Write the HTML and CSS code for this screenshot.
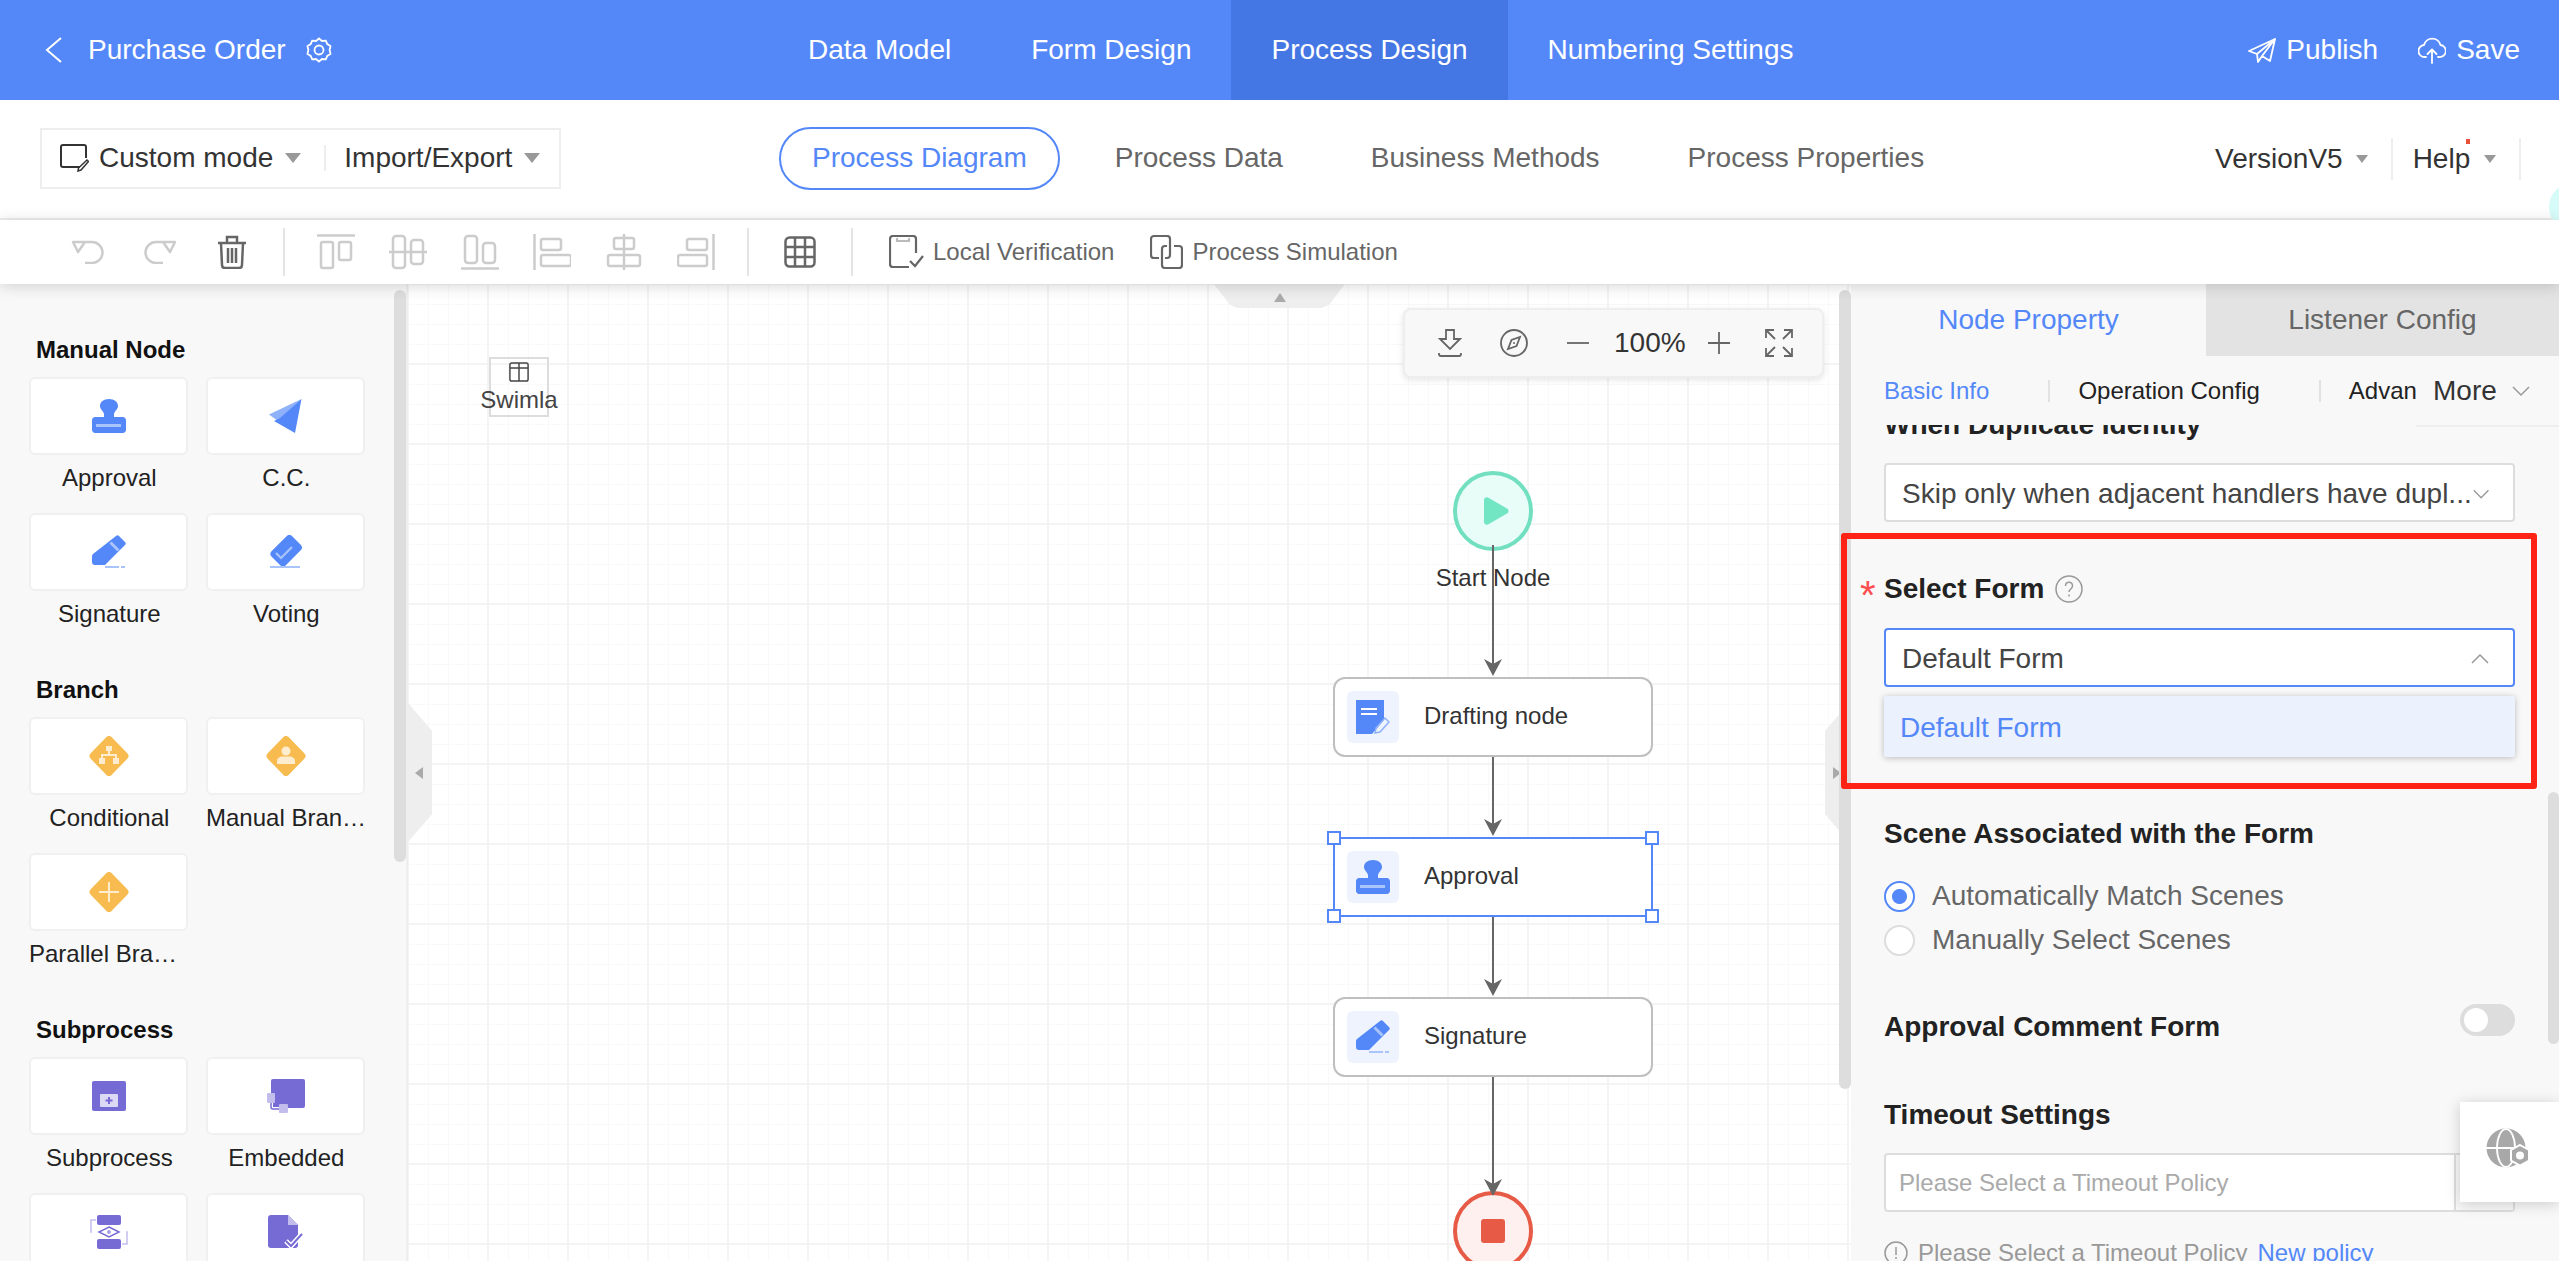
FILE: index.html
```html
<!DOCTYPE html>
<html>
  <head>
    <title>Purchase Order - Process Design</title>
    <link rel="stylesheet" href="styles.css">
  </head>
  <body>
    <svg class="defs" width="0" height="0">
      <defs>
        <symbol id="ico-stamp" viewBox="0 0 34 34">
          <path fill="#5488f8" d="M17 0c5.500 0 9 3 9 7 0 3.500-3.500 5-4 8v3h9c1.500 0 3 1.500 3 3v10c0 1.500-1.500 3-3 3H3c-1.500 0-3-1.500-3-3V21c0-1.500 1.500-3 3-3h9v-3c-.5-3-4-4.500-4-8 0-4 3.500-7 9-7z"/>
          <rect x="4" y="25" width="25" height="3" fill="#a9c4fb"/>
        </symbol>
        <symbol id="ico-pen" viewBox="0 0 34 34">
          <path fill="#5488f8" d="M24 1c1-1 2-1 3 0l6 6c1 1 1 2 0 3L13 30H3c-2 0-3-1-3-3v-5c0-1 0-2 1-3z"/>
          <path stroke="#a9c4fb" stroke-width="3" d="M18.500 7.500l8 8"/>
          <path stroke="#a9c4fb" stroke-width="2" d="M13 32h14M29 32h4"/>
        </symbol>
      </defs>
    </svg>

    <div class="app">
      <header class="topbar">
        <div class="topbar-left">
          <svg class="back" width="18" height="26" viewBox="0 0 18 26"><path d="M16 1L2 13l14 12" fill="none" stroke="#fff" stroke-width="2"/></svg>
          <span class="doc-title">Purchase Order</span>
          <svg class="gear" width="26" height="26" viewBox="0 0 26 26" fill="none" stroke="#fff" stroke-width="1.800"><path d="M13 1.500l3 2.500 3.800-.4 1.500 3.500 3.200 2-.9 3.900.9 3.900-3.200 2-1.500 3.500-3.800-.4-3 2.500-3-2.500-3.800.4-1.500-3.500-3.200-2 .9-3.900-.9-3.900 3.200-2 1.500-3.500 3.800.4z"/><circle cx="13" cy="13" r="4.500"/></svg>
        </div>
        <nav class="topnav">
          <a class="topnav-item">Data Model</a>
          <a class="topnav-item">Form Design</a>
          <a class="topnav-item active">Process Design</a>
          <a class="topnav-item">Numbering Settings</a>
        </nav>
        <div class="topbar-right">
          <span class="top-action">
            <svg width="28" height="26" viewBox="0 0 28 26" fill="none" stroke="#fff" stroke-width="1.800" stroke-linejoin="round"><path d="M27 2L1 14l8 3zM27 2L9 17l1 8 4-6zM27 2l-5 22-8-5"/></svg>
            Publish
          </span>
          <span class="top-action">
            <svg width="28" height="28" viewBox="0 0 28 28" fill="none" stroke="#fff" stroke-width="1.800" stroke-linecap="round" stroke-linejoin="round"><path d="M8 21H7a6 6 0 0 1-1-12 8.500 8.500 0 0 1 16.500 0A6 6 0 0 1 21 21h-1M14 27V14M9.500 18l4.500-4.500 4.500 4.500"/></svg>
            Save
          </span>
        </div>
      </header>

      <div class="modebar">
        <div class="modebox">
          <svg width="29" height="28" viewBox="0 0 29 28" fill="none" stroke="#333" stroke-width="2"><path d="M20 23H3c-1 0-2-1-2-2V3c0-1 1-2 2-2h21c1 0 2 1 2 2v11"/><path d="M27 16l1.500 1.500L21 26l-3 1 .5-3z" stroke-width="1.500"/></svg>
          <span class="modebox-text">Custom mode</span>
          <i class="caret"></i>
          <i class="modebox-sep"></i>
          <span class="modebox-text">Import/Export</span>
          <i class="caret"></i>
        </div>
        <div class="viewtabs">
          <a class="viewtab active">Process Diagram</a>
          <a class="viewtab">Process Data</a>
          <a class="viewtab">Business Methods</a>
          <a class="viewtab">Process Properties</a>
        </div>
        <div class="modebar-right">
          <span class="meta-item version">VersionV5<i class="caret small"></i></span>
          <span class="meta-item help"><span class="help-text">Help<i class="dot"></i></span><i class="caret small"></i></span>
        </div>
        <i class="bubble"></i>
      </div>

      <div class="toolbar">
        <span class="tool"><svg width="34" height="24" viewBox="0 0 34 24" fill="none" stroke="#ccc" stroke-width="2.500" stroke-linejoin="round"><path d="M2 2h12L7 12zM13 2h8a10.500 10.500 0 0 1 0 21h-7"/></svg></span>
        <span class="tool"><svg width="34" height="24" viewBox="0 0 34 24" fill="none" stroke="#ccc" stroke-width="2.500" stroke-linejoin="round"><path d="M32 2H20l7 10zM21 2h-8a10.500 10.500 0 0 0 0 21h7"/></svg></span>
        <span class="tool"><svg width="30" height="34" viewBox="0 0 30 34" fill="none" stroke="#666" stroke-width="2.500"><path d="M1 8h28M10 7V2h10v5M4 8l1 22c0 1.500 1 3 3 3h14c2 0 3-1.500 3-3l1-22M11 13v15M19 13v15M15 13v15"/></svg></span>
        <i class="tool-sep"></i>
        <span class="tool"><svg class="align" width="38" height="36" viewBox="0 0 38 36"><path d="M0 1.500h38"/><rect x="4" y="8" width="12" height="26" rx="2"/><rect x="22" y="8" width="12" height="18" rx="2"/></svg></span>
        <span class="tool"><svg class="align" width="38" height="36" viewBox="0 0 38 36"><path d="M0 18h38"/><rect x="4" y="2" width="12" height="32" rx="3"/><rect x="22" y="6" width="12" height="24" rx="3"/></svg></span>
        <span class="tool"><svg class="align" width="38" height="36" viewBox="0 0 38 36"><path d="M0 34.500h38"/><rect x="4" y="2" width="12" height="27" rx="3"/><rect x="22" y="9" width="12" height="20" rx="3"/></svg></span>
        <span class="tool"><svg class="align" width="38" height="36" viewBox="0 0 38 36"><path d="M1.500 0v36"/><rect x="8" y="5" width="20" height="11" rx="2"/><rect x="8" y="21" width="30" height="11" rx="2"/></svg></span>
        <span class="tool"><svg class="align" width="38" height="36" viewBox="0 0 38 36"><path d="M19 0v36"/><rect x="9" y="4" width="20" height="11" rx="2"/><rect x="3" y="21" width="32" height="11" rx="2"/></svg></span>
        <span class="tool"><svg class="align" width="38" height="36" viewBox="0 0 38 36"><path d="M36.500 0v36"/><rect x="10" y="5" width="20" height="11" rx="2"/><rect x="1" y="21" width="29" height="11" rx="2"/></svg></span>
        <i class="tool-sep"></i>
        <span class="tool"><svg width="32" height="32" viewBox="0 0 32 32" fill="none" stroke="#666" stroke-width="2.500"><rect x="1.500" y="1.500" width="29" height="29" rx="4"/><path d="M1 11h30M1 21h30M11 1v30M21 1v30"/></svg></span>
        <i class="tool-sep"></i>
        <span class="tool-text first">
          <svg width="35" height="34" viewBox="0 0 35 34" fill="none" stroke="#666" stroke-width="2.200"><path d="M20 32H4c-2 0-3-1-3-3V4c0-2 1-3 3-3h20c2 0 3 1 3 3v14"/><path d="M8 3v3h12V3" stroke="#bbb"/><path d="M21 26l5 5 8-10"/></svg>
          Local Verification
        </span>
        <span class="tool-text">
          <svg width="33" height="34" viewBox="0 0 33 34" fill="none" stroke="#666" stroke-width="2.200"><path d="M9 23H4a3 3 0 0 1-3-3V4a3 3 0 0 1 3-3h13a3 3 0 0 1 3 3v16a3 3 0 0 1-3 3h-2"/><path d="M24 11h5a3 3 0 0 1 3 3v16a3 3 0 0 1-3 3H15a3 3 0 0 1-3-3V14a3 3 0 0 1 3-3h2"/></svg>
          Process Simulation
        </span>
      </div>

      <main class="workspace">
        <aside class="palette">
          <i class="scroll-thumb palette-thumb"></i>

          <section class="palette-group">
            <h3 class="palette-title">Manual Node</h3>
            <div class="palette-grid">
              <div class="palette-item">
                <div class="palette-card"><svg width="34" height="34"><use href="#ico-stamp"/></svg></div>
                <div class="palette-label">Approval</div>
              </div>
              <div class="palette-item">
                <div class="palette-card">
                  <svg width="33" height="34" viewBox="0 0 33 34"><path fill="#8fb1fa" d="M32.500 0L0 15.500 9 22z"/><path fill="#5488f8" d="M32.500 0L26 34 5 22l6-3z"/></svg>
                </div>
                <div class="palette-label">C.C.</div>
              </div>
              <div class="palette-item">
                <div class="palette-card"><svg width="34" height="34"><use href="#ico-pen"/></svg></div>
                <div class="palette-label">Signature</div>
              </div>
              <div class="palette-item">
                <div class="palette-card">
                  <svg width="35" height="34" viewBox="0 0 35 34"><rect x="3" y="6" width="29" height="20" rx="4" fill="#5488f8" transform="rotate(-45 17.500 15)"/><path d="M8 18l5 5 11-11" fill="none" stroke="#a9c4fb" stroke-width="2.200"/><path d="M2 32h30" stroke="#a9c4fb" stroke-width="2"/></svg>
                </div>
                <div class="palette-label">Voting</div>
              </div>
            </div>
          </section>

          <section class="palette-group">
            <h3 class="palette-title">Branch</h3>
            <div class="palette-grid">
              <div class="palette-item">
                <div class="palette-card">
                  <svg width="40" height="40" viewBox="0 0 40 40"><path fill="#f7bb4f" d="M17 1.500c1.500-2 4.500-2 6 0l15.500 16c1.500 1.500 1.500 3.500 0 5L23 38.500c-1.500 2-4.500 2-6 0L1.500 22.500c-1.500-1.500-1.500-3.500 0-5z"/><path fill="#fdeccd" d="M17 10h6v5h-2v3h7v4h2v6h-6v-6h2v-2H14v2h2v6h-6v-6h2v-4h7v-3h-2z"/></svg>
                </div>
                <div class="palette-label">Conditional</div>
              </div>
              <div class="palette-item">
                <div class="palette-card">
                  <svg width="40" height="40" viewBox="0 0 40 40"><path fill="#f7bb4f" d="M17 1.500c1.500-2 4.500-2 6 0l15.500 16c1.500 1.500 1.500 3.500 0 5L23 38.500c-1.500 2-4.500 2-6 0L1.500 22.500c-1.500-1.500-1.500-3.500 0-5z"/><circle cx="20" cy="15" r="4.500" fill="#fdeccd"/><path fill="#fdeccd" d="M11 28v-3c0-3 3-4.500 5-4.500h8c2 0 5 1.500 5 4.500v3z"/></svg>
                </div>
                <div class="palette-label">Manual Branch</div>
              </div>
              <div class="palette-item">
                <div class="palette-card">
                  <svg width="40" height="40" viewBox="0 0 40 40"><path fill="#f7bb4f" d="M17 1.500c1.500-2 4.500-2 6 0l15.500 16c1.500 1.500 1.500 3.500 0 5L23 38.500c-1.500 2-4.500 2-6 0L1.500 22.500c-1.500-1.500-1.500-3.500 0-5z"/><path stroke="#fdeccd" stroke-width="2" d="M20 10v20M10 20h20"/></svg>
                </div>
                <div class="palette-label">Parallel Branch</div>
              </div>
            </div>
          </section>

          <section class="palette-group">
            <h3 class="palette-title">Subprocess</h3>
            <div class="palette-grid">
              <div class="palette-item">
                <div class="palette-card">
                  <svg width="34" height="30" viewBox="0 0 34 30"><rect width="34" height="30" rx="2" fill="#766bd5"/><rect x="8" y="13" width="18" height="13" rx="1" fill="#dcd9f5"/><path d="M17 16v7M13.500 19.500h7" stroke="#766bd5" stroke-width="2"/></svg>
                </div>
                <div class="palette-label">Subprocess</div>
              </div>
              <div class="palette-item">
                <div class="palette-card">
                  <svg width="38" height="34" viewBox="0 0 38 34"><rect x="4" y="0" width="34" height="29" rx="2" fill="#766bd5"/><path d="M4 18v10c0 1 1 2 2 2h6" fill="none" stroke="#fff" stroke-width="4"/><path d="M4 18v10c0 1 1 2 2 2h6" fill="none" stroke="#766bd5" stroke-width="1.500"/><rect y="14" width="8" height="10" rx="1" fill="#c3bdee"/><rect x="12" y="25" width="9" height="9" rx="1" fill="#c3bdee"/></svg>
                </div>
                <div class="palette-label">Embedded</div>
              </div>
              <div class="palette-item">
                <div class="palette-card">
                  <svg width="38" height="34" viewBox="0 0 38 34"><rect x="7" width="24" height="10" rx="2" fill="#766bd5"/><rect x="7" y="24" width="24" height="10" rx="2" fill="#766bd5"/><path d="M19 12l10 5-10 5-10-5z" fill="none" stroke="#766bd5" stroke-width="1.500"/><circle cx="19" cy="17" r="2" fill="#a79fe4"/><path d="M6 5H1v12h1M32 29h5V17h-1" fill="none" stroke="#c3bdee" stroke-width="1.500"/></svg>
                </div>
              </div>
              <div class="palette-item">
                <div class="palette-card">
                  <svg width="36" height="34" viewBox="0 0 36 34"><path d="M3 0h17l10 10v20c0 2-1 3-3 3H3c-2 0-3-1-3-3V3c0-2 1-3 3-3z" fill="#766bd5"/><path d="M20 0l10 10H20z" fill="#c3bdee"/><path d="M18 26l5 5 11-12" fill="none" stroke="#fff" stroke-width="5"/><path d="M18 26l5 5 11-12" fill="none" stroke="#766bd5" stroke-width="2"/></svg>
                </div>
              </div>
            </div>
          </section>
        </aside>

        <div class="canvas">
          <div class="swimlane">
            <svg width="22" height="22" viewBox="0 0 22 22" fill="none" stroke="#444" stroke-width="1.600"><rect x="1" y="1" width="20" height="20" rx="2"/><path d="M1 6.500h20M11 1v20"/></svg>
            <span class="swimlane-text">Swimla</span>
          </div>

          <div class="collapse-top"><i class="tri-up"></i></div>
          <div class="collapse-side left"><i class="tri-left"></i></div>
          <div class="collapse-side right"><i class="tri-right"></i></div>

          <div class="zoombar">
            <svg width="24" height="28" viewBox="0 0 24 28" fill="none" stroke="#666" stroke-width="1.800"><path d="M8 1h8v9h6L12 20 2 10h6zM1 24v1c0 1 1 2 2 2h18c1 0 2-1 2-2v-1"/></svg>
            <svg width="28" height="28" viewBox="0 0 28 28" fill="none" stroke="#666" stroke-width="1.800"><circle cx="14" cy="14" r="13"/><path d="M20 8l-3.500 9L8 20l3.500-9z"/><circle cx="14" cy="14" r="1" fill="#666" stroke="none"/></svg>
            <svg width="24" height="24" viewBox="0 0 24 24" stroke="#666" stroke-width="1.800"><path d="M1 12h22"/></svg>
            <span class="zoom-value">100%</span>
            <svg width="24" height="24" viewBox="0 0 24 24" stroke="#666" stroke-width="1.800"><path d="M1 12h22M12 1v22"/></svg>
            <svg width="28" height="28" viewBox="0 0 28 28" fill="none" stroke="#666" stroke-width="1.800"><path d="M9 1H1v8M1 1l9 9M19 1h8v8M27 1l-9 9M9 27H1v-8M1 27l9-9M19 27h8v-8M27 27l-9-9"/></svg>
          </div>

          <div class="event start">
            <svg width="28" height="28" viewBox="0 0 28 28"><path fill="#72e6c2" d="M2 3c0-2 2-3.500 4-2.500l19 11c2 1 2 4 0 5L6 27.500c-2 1-4-.5-4-2.500z"/></svg>
          </div>
          <div class="event-label">Start Node</div>

          <div class="event end"><i class="stop"></i></div>

          <div class="node drafting">
            <span class="node-icon">
              <svg width="34" height="34" viewBox="0 0 34 34"><path fill="#5488f8" d="M0 0h28v20L18 34H0z"/><path stroke="#fff" stroke-width="2" d="M5 9h16M5 14h16"/><path fill="#eef3fe" stroke="#eef3fe" stroke-width="3" d="M18 34l12-14 4 4-12 10z"/><path fill="none" stroke="#8fb1fa" stroke-width="1.500" d="M20 28l9-10 4 4-9 10-5 1z"/></svg>
            </span>
            <span class="node-label">Drafting node</span>
          </div>

          <div class="node selected approval">
            <span class="node-icon"><svg width="34" height="34"><use href="#ico-stamp"/></svg></span>
            <span class="node-label">Approval</span>
            <i class="handle tl"></i><i class="handle tr"></i><i class="handle bl"></i><i class="handle br"></i>
          </div>

          <div class="node signature">
            <span class="node-icon"><svg width="34" height="34"><use href="#ico-pen"/></svg></span>
            <span class="node-label">Signature</span>
          </div>

          <svg class="edges" width="1443" height="977">
            <g stroke="#666" stroke-width="2">
              <path d="M1085 261V380"/>
              <path d="M1085 473V541"/>
              <path d="M1085 633V701"/>
              <path d="M1085 793V900"/>
            </g>
            <g fill="#666">
              <path d="M1085 392l-9-17 9 5 9-5z"/>
              <path d="M1085 552l-9-17 9 5 9-5z"/>
              <path d="M1085 712l-9-17 9 5 9-5z"/>
              <path d="M1085 912l-9-17 9 5 9-5z"/>
            </g>
          </svg>

          <i class="scroll-thumb canvas-thumb"></i>
        </div>

        <aside class="props">
          <div class="props-tabs">
            <a class="props-tab active">Node Property</a>
            <a class="props-tab">Listener Config</a>
          </div>
          <div class="subtabs">
            <div class="subtabs-list">
              <a class="subtab active">Basic Info</a>
              <i class="subtab-sep"></i>
              <a class="subtab">Operation Config</a>
              <i class="subtab-sep"></i>
              <a class="subtab">Advanced</a>
            </div>
            <div class="subtabs-more">
              More
              <svg width="20" height="12" viewBox="0 0 20 12" fill="none" stroke="#999" stroke-width="1.500"><path d="M2 2l8 8 8-8"/></svg>
            </div>
          </div>

          <div class="form">
            <div class="form-inner">
              <div class="field-label cut">When Duplicate Identity</div>
              <div class="select">
                <span class="select-text">Skip only when adjacent handlers have dupl...</span>
                <svg class="chevron" width="20" height="12" viewBox="0 0 20 12" fill="none" stroke="#999" stroke-width="1.500"><path d="M2 2l8 8 8-8"/></svg>
              </div>

              <div class="field-label select-form">
                <i class="required">*</i>
                Select Form
                <svg class="help-icon" width="28" height="28" viewBox="0 0 28 28" fill="none" stroke="#999" stroke-width="1.500"><circle cx="14" cy="14" r="13"/><path d="M10.500 11c0-5 7-5 7 0 0 3-3.500 3-3.500 6M14 19.500v2"/></svg>
              </div>
              <div class="select-wrap">
                <div class="select open">
                  <span class="select-text">Default Form</span>
                  <svg class="chevron" width="20" height="12" viewBox="0 0 20 12" fill="none" stroke="#999" stroke-width="1.500"><path d="M2 10l8-8 8 8"/></svg>
                </div>
                <div class="select-menu">Default Form</div>
              </div>

              <div class="field-label scene">Scene Associated with the Form</div>
              <label class="radio checked"><i class="radio-dot"></i>Automatically Match Scenes</label>
              <label class="radio"><i class="radio-dot"></i>Manually Select Scenes</label>

              <div class="field-label comment">
                Approval Comment Form
                <i class="switch"></i>
              </div>

              <div class="field-label timeout">Timeout Settings</div>
              <div class="input-group">
                <span class="input-placeholder">Please Select a Timeout Policy</span>
                <i class="input-addon"></i>
              </div>
              <div class="hint">
                <svg width="24" height="24" viewBox="0 0 24 24" fill="none" stroke="#999" stroke-width="1.500"><circle cx="12" cy="12" r="11"/><path d="M12 6v8M12 16v2"/></svg>
                <span>Please Select a Timeout Policy</span>
                <a class="hint-link">New policy</a>
              </div>
            </div>
          </div>

          <i class="scroll-thumb props-thumb"></i>

          <div class="float-globe">
            <svg width="44" height="40" viewBox="0 0 44 40"><circle cx="20" cy="20" r="19.500" fill="#a8a8a8"/><ellipse cx="20" cy="20" rx="9" ry="19" fill="none" stroke="#fff" stroke-width="1.800"/><path d="M0 20h40" stroke="#fff" stroke-width="1.800"/><path fill="#a8a8a8" stroke="#fff" stroke-width="2" d="M34 17l9 5v10.500l-9 5-9-5V22z"/><circle cx="34" cy="27.500" r="4" fill="#fff"/></svg>
          </div>
        </aside>

        <div class="highlight"></div>
      </main>
    </div>
  </body>
</html>
```

FILE: styles.css
```css
* {
  box-sizing: border-box;
}
html,
body {
  margin: 0;
  height: 100%;
  overflow: hidden;
}
body {
  font-family: "Liberation Sans", Arial, sans-serif;
  font-size: 24px;
  color: #333;
}
i {
  font-style: normal;
}
.defs {
  position: absolute;
}
.app {
  display: flex;
  flex-direction: column;
  height: 1261px;
  overflow: hidden;
}

/* top blue bar */
.topbar {
  display: flex;
  align-items: stretch;
  flex: none;
  height: 100px;
  background: #5488f8;
  color: #fff;
  font-size: 28px;
}
.topbar-left {
  display: flex;
  align-items: center;
  width: 768px;
  padding-left: 45px;
}
.doc-title {
  margin-left: 25px;
}
.gear {
  margin-left: 20px;
}
.topnav {
  display: flex;
}
.topnav-item {
  display: flex;
  align-items: center;
  padding: 0 40px;
}
.topnav-item.active {
  background: #4476e4;
}
.topbar-right {
  display: flex;
  align-items: center;
  gap: 40px;
  margin-left: auto;
  padding-right: 39px;
}
.top-action {
  display: flex;
  align-items: center;
  gap: 10px;
}

/* second row */
.modebar {
  position: relative;
  display: flex;
  align-items: center;
  flex: none;
  height: 120px;
  padding: 0 40px 2px;
  background: #fff;
  border-bottom: 2px solid #eee;
  font-size: 28px;
}
.modebox {
  display: flex;
  align-items: center;
  width: 521px;
  height: 61px;
  padding-left: 18px;
  border: 2px solid #eee;
}
.modebox-text {
  color: #333;
}
.modebox svg {
  margin-right: 10px;
}
.caret {
  display: inline-block;
  margin-left: 12px;
  border-top: 10px solid #999;
  border-left: 8px solid transparent;
  border-right: 8px solid transparent;
}
.caret.small {
  margin-left: 13px;
  border-top-width: 8px;
  border-left-width: 6px;
  border-right-width: 6px;
}
.modebox-sep {
  width: 2px;
  height: 26px;
  margin: 0 18px 0 23px;
  background: #eee;
}
.viewtabs {
  display: flex;
  gap: 22px;
  margin-left: 218px;
  color: #666;
}
.viewtab {
  display: flex;
  align-items: center;
  height: 63px;
  padding: 0 31px;
  border: 2px solid transparent;
  border-radius: 32px;
}
.viewtab.active {
  border-color: #5488f8;
  color: #5488f8;
}
.modebar-right {
  position: absolute;
  left: 2215px;
  top: 38px;
  display: flex;
  align-items: center;
  height: 42px;
}
.meta-item {
  display: flex;
  align-items: center;
  height: 42px;
}
.version {
  padding-right: 23px;
  border-right: 2px solid #eee;
}
.help {
  padding: 0 23px 0 20px;
  border-right: 2px solid #eee;
}
.help .caret.small {
  margin-left: 14px;
}
.help-text {
  position: relative;
}
.dot {
  position: absolute;
  right: 0;
  top: -4px;
  width: 4px;
  height: 5px;
  background: #e8503a;
}
.bubble {
  position: absolute;
  right: -38px;
  top: 83px;
  width: 48px;
  height: 48px;
  border-radius: 50%;
  background: #d6fbf8;
}

/* tools row */
.toolbar {
  position: relative;
  z-index: 3;
  display: flex;
  align-items: center;
  flex: none;
  height: 64px;
  padding-left: 52px;
  background: #fff;
  box-shadow: 0 2px 14px rgba(0, 0, 0, 0.16);
}
.tool {
  display: flex;
  align-items: center;
  justify-content: center;
  width: 72px;
}
.tool-sep {
  width: 2px;
  height: 48px;
  margin: 0 15px;
  background: #e4e4e4;
}
.align {
  fill: none;
  stroke: #ccc;
  stroke-width: 2.500;
}
.tool-text {
  display: flex;
  align-items: center;
  gap: 9px;
  margin-left: 36px;
  color: #666;
}
.tool-text.first {
  margin-left: 21px;
}

/* main area */
.workspace {
  position: relative;
  display: flex;
  flex: 1;
  min-height: 0;
}
.scroll-thumb {
  position: absolute;
  width: 12px;
  border-radius: 6px;
  background: #ddd;
}

/* left palette */
.palette {
  position: relative;
  flex: none;
  width: 408px;
  padding: 51px 0 0 29px;
  overflow: hidden;
  background: #f8f8f8;
  border-right: 2px solid #eee;
}
.palette-thumb {
  left: 394px;
  top: 6px;
  height: 572px;
}
.palette-group {
  margin-bottom: 26px;
}
.palette-title {
  height: 30px;
  margin: 0 0 12px 7px;
  font-size: 24px;
  line-height: 30px;
  color: #111;
}
.palette-grid {
  display: grid;
  grid-template-columns: 159px 159px;
  column-gap: 18px;
}
.palette-item {
  height: 136px;
}
.palette-card {
  display: flex;
  align-items: center;
  justify-content: center;
  height: 78px;
  background: #fff;
  border: 2px solid #f0f0f0;
  border-radius: 6px;
}
.palette-label {
  height: 46px;
  margin-right: -1.700px;
  overflow: hidden;
  text-align: center;
  text-overflow: ellipsis;
  white-space: nowrap;
  line-height: 46px;
  color: #222;
}

/* canvas */
.canvas {
  position: relative;
  flex: 1;
  overflow: hidden;
  background-color: #fff;
  background-image:
    linear-gradient(to right, #f4f4f4 2px, transparent 2px),
    linear-gradient(to bottom, #f4f4f4 2px, transparent 2px),
    linear-gradient(to right, #f9f9f9 1px, transparent 1px),
    linear-gradient(to bottom, #f9f9f9 1px, transparent 1px);
  background-size: 80px 80px, 80px 80px, 20px 20px, 20px 20px;
  background-position: -1px -1px, -1px -1px, 0 0, 0 0;
}
.swimlane {
  position: absolute;
  left: 81px;
  top: 73px;
  width: 60px;
  height: 60px;
  border: 2px solid #ddd;
  display: flex;
  flex-direction: column;
  align-items: center;
  padding-top: 3px;
}
.swimlane-text {
  margin-top: 3px;
  line-height: 30px;
  color: #444;
  white-space: nowrap;
}
.collapse-top {
  position: absolute;
  left: 806px;
  top: 0;
  width: 131px;
  height: 24px;
  display: flex;
  justify-content: center;
  padding-top: 9px;
  background: #eee;
  clip-path: polygon(0 0, 100% 0, 88% 86%, 82% 100%, 18% 100%, 12% 86%);
}
.tri-up {
  border-bottom: 9px solid #aaa;
  border-left: 6px solid transparent;
  border-right: 6px solid transparent;
  height: 0;
}
.collapse-side {
  position: absolute;
  top: 419px;
  width: 24px;
  height: 139px;
  display: flex;
  align-items: center;
  background: #eee;
}
.collapse-side.left {
  left: 0;
  padding-left: 7px;
  clip-path: polygon(0 0, 100% 20%, 100% 80%, 0 100%);
}
.collapse-side.right {
  left: 1417px;
  padding-left: 8px;
  clip-path: polygon(100% 0, 0 20%, 0 80%, 100% 100%);
}
.tri-left {
  border-right: 8px solid #aaa;
  border-top: 6px solid transparent;
  border-bottom: 6px solid transparent;
}
.tri-right {
  border-left: 8px solid #aaa;
  border-top: 6px solid transparent;
  border-bottom: 6px solid transparent;
}
.zoombar {
  position: absolute;
  left: 995px;
  top: 24px;
  width: 421px;
  height: 70px;
  display: flex;
  align-items: center;
  padding-left: 33px;
  background: #f8f8f8;
  border: 2px solid #eee;
  border-radius: 8px;
  box-shadow: 0 2px 6px rgba(0, 0, 0, 0.1);
}
.zoombar svg:nth-child(2) {
  margin-left: 38px;
}
.zoombar svg:nth-child(3) {
  margin-left: 38px;
}
.zoom-value {
  margin-left: 24px;
  font-size: 28px;
}
.zoombar svg:nth-child(5) {
  margin-left: 21px;
}
.zoombar svg:nth-child(6) {
  margin-left: 34px;
}
.event {
  position: absolute;
  left: 1045px;
  width: 80px;
  height: 80px;
  display: flex;
  align-items: center;
  justify-content: center;
  border-radius: 50%;
  border: 4px solid;
}
.event.start {
  top: 187px;
  padding-left: 5px;
  background: #e8fdf8;
  border-color: #72e0c0;
}
.event.end {
  top: 907px;
  background: #fdf0ee;
  border-color: #e65a46;
}
.stop {
  width: 24px;
  height: 24px;
  border-radius: 3px;
  background: #e65a46;
}
.event-label {
  position: absolute;
  left: 985px;
  top: 279px;
  width: 200px;
  text-align: center;
  line-height: 30px;
}
.node {
  position: absolute;
  left: 925px;
  width: 320px;
  height: 80px;
  display: flex;
  align-items: center;
  padding-left: 12px;
  background: #fff;
  border: 2px solid #bfbfbf;
  border-radius: 12px;
}
.drafting {
  top: 393px;
}
.approval {
  top: 553px;
}
.signature {
  top: 713px;
}
.node.selected {
  border-color: #5488f8;
  border-radius: 0;
}
.node-icon {
  display: flex;
  align-items: center;
  justify-content: center;
  width: 52px;
  height: 52px;
  border-radius: 6px;
  background: #eef3fe;
}
.node-label {
  margin-left: 25px;
  margin-top: -2px;
}
.handle {
  position: absolute;
  width: 14px;
  height: 14px;
  background: #fff;
  border: 2px solid #5488f8;
}
.tl {
  left: -8px;
  top: -8px;
}
.tr {
  right: -8px;
  top: -8px;
}
.bl {
  left: -8px;
  bottom: -8px;
}
.br {
  right: -8px;
  bottom: -8px;
}
.edges {
  position: absolute;
  left: 0;
  top: 0;
  pointer-events: none;
}
.canvas-thumb {
  left: 1431px;
  top: 6px;
  height: 799px;
}

/* right panel */
.props {
  position: relative;
  flex: none;
  width: 708px;
  overflow: hidden;
  background: #f8f8f8;
}
.props-tabs {
  display: flex;
  height: 72px;
}
.props-tab {
  display: flex;
  align-items: center;
  justify-content: center;
  flex: none;
  width: 353px;
  background: #e3e3e3;
  font-size: 28px;
  color: #666;
}
.props-tab.active {
  width: 355px;
  background: #f8f8f8;
  color: #5488f8;
}
.subtabs {
  display: flex;
  height: 69px;
}
.subtabs-list {
  display: flex;
  align-items: center;
  width: 565px;
  padding-left: 33px;
  overflow: hidden;
  white-space: nowrap;
  color: #222;
}
.subtab.active {
  color: #5488f8;
}
.subtab-sep {
  flex: none;
  width: 2px;
  height: 22px;
  margin: 0 28px 0 59px;
  background: #e2e2e2;
}
.subtabs-more {
  display: flex;
  align-items: center;
  flex: 1;
  gap: 14px;
  padding-left: 17px;
  font-size: 28px;
  color: #333;
  background: #f8f8f8;
  border-bottom: 2px solid #eee;
  height: 71px;
  position: relative;
}
.form {
  height: 836px;
  overflow: hidden;
}
.form-inner {
  width: 664px;
  padding-left: 33px;
}
.field-label {
  display: flex;
  align-items: center;
  height: 36px;
  font-size: 28px;
  font-weight: bold;
  color: #222;
  position: relative;
}
.cut {
  margin-top: -18px;
  margin-bottom: 20px;
}
.select {
  display: flex;
  align-items: center;
  justify-content: space-between;
  height: 59px;
  padding: 2px 23px 0 16px;
  background: #fff;
  border: 2px solid #ddd;
  border-radius: 4px;
  font-size: 28px;
  color: #444;
}
.select-text {
  white-space: nowrap;
}
.select.open {
  border-color: #5488f8;
}
.select-form {
  margin-top: 49px;
  margin-bottom: 21px;
}
.required {
  position: absolute;
  left: -24px;
  top: 4px;
  font-weight: normal;
  font-size: 40px;
  line-height: 40px;
  color: #ff4d4f;
}
.help-icon {
  margin-left: 11px;
}
.select-wrap {
  position: relative;
}
.select-menu {
  position: absolute;
  left: 0;
  right: 0;
  top: 68px;
  height: 61px;
  display: flex;
  align-items: center;
  padding: 2px 0 0 16px;
  background: #ebf1fd;
  border-radius: 2px;
  box-shadow: 0 1px 6px rgba(0, 0, 0, 0.25);
  font-size: 28px;
  color: #5488f8;
}
.scene {
  margin-top: 129px;
  margin-bottom: 22px;
}
.radio {
  display: flex;
  align-items: center;
  height: 44px;
  font-size: 28px;
  color: #666;
}
.radio-dot {
  flex: none;
  width: 31px;
  height: 31px;
  margin-right: 17px;
  background: #fff;
  border: 2px solid #ddd;
  border-radius: 50%;
}
.radio.checked .radio-dot {
  border-color: #5488f8;
  background: radial-gradient(circle, #5488f8 0 7px, #fff 8px);
}
.comment {
  justify-content: space-between;
  margin-top: 47px;
}
.switch {
  position: relative;
  top: -7px;
  width: 55px;
  height: 32px;
  border-radius: 16px;
  background: #ddd;
}
.switch::after {
  content: "";
  position: absolute;
  left: 4px;
  top: 4px;
  width: 24px;
  height: 24px;
  border-radius: 50%;
  background: #fff;
}
.timeout {
  margin-top: 52px;
  margin-bottom: 20px;
}
.input-group {
  display: flex;
  align-items: center;
  justify-content: space-between;
  height: 59px;
  padding-left: 13px;
  background: #fff;
  border: 2px solid #ddd;
  border-radius: 4px;
  color: #aaa;
}
.input-addon {
  width: 59px;
  height: 100%;
  background: #f8f8f8;
  border-left: 2px solid #ddd;
}
.hint {
  display: flex;
  align-items: center;
  height: 32px;
  margin-top: 25px;
  color: #999;
  white-space: nowrap;
}
.hint svg {
  margin-right: 10px;
}
.hint-link {
  margin-left: 10px;
  color: #5488f8;
}
.props-thumb {
  left: 697px;
  top: 508px;
  width: 11px;
  height: 252px;
}
.float-globe {
  position: absolute;
  left: 609px;
  top: 818px;
  width: 99px;
  height: 100px;
  display: flex;
  align-items: center;
  justify-content: center;
  padding-right: 4px;
  padding-bottom: 8px;
  background: #fff;
  box-shadow: 0 2px 14px rgba(0, 0, 0, 0.18);
}

/* red annotation box drawn over the screenshot */
.highlight {
  position: absolute;
  left: 1841px;
  top: 249px;
  width: 696px;
  height: 256px;
  border: 6px solid #ff2315;
  border-radius: 3px;
  pointer-events: none;
}
```
